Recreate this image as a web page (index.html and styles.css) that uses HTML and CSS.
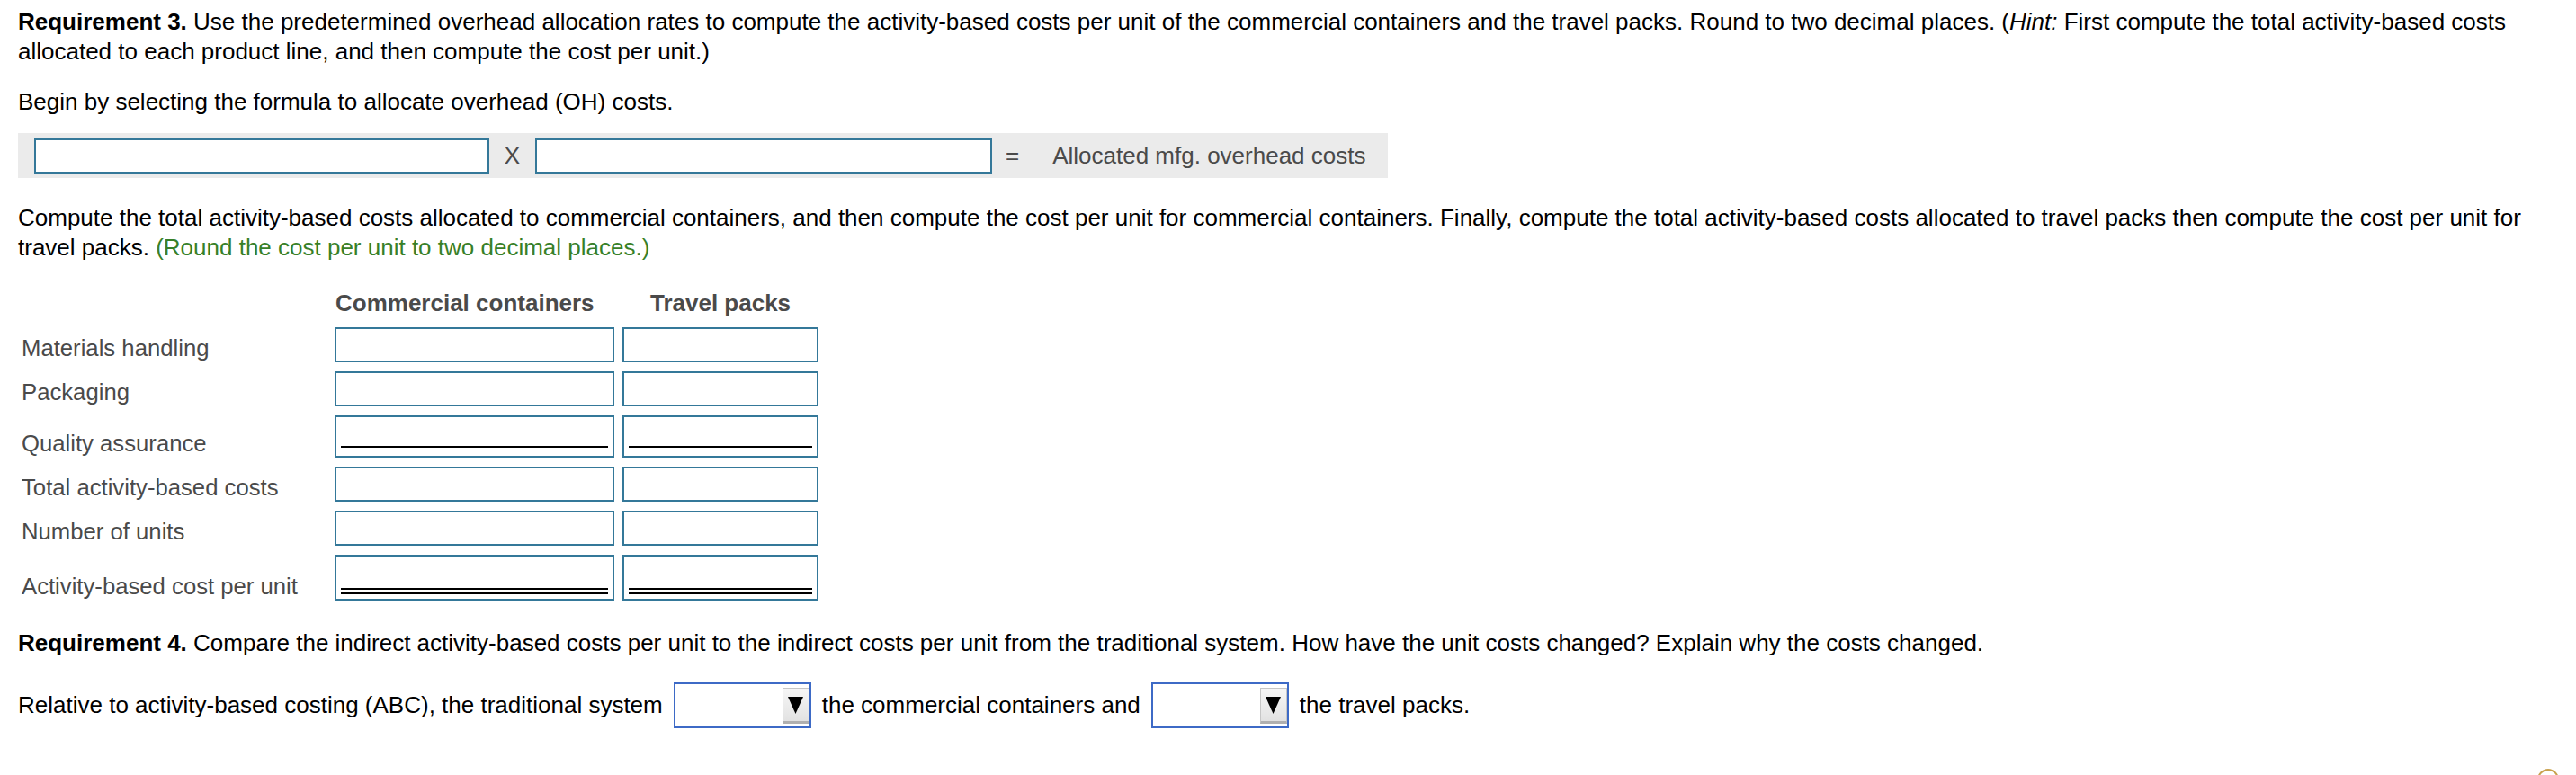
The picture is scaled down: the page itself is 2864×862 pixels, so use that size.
FILE: index.html
```html
<!DOCTYPE html>
<html lang="en">
<head>
<meta charset="utf-8">
<title>Requirement 3 and 4</title>
<link rel="stylesheet" href="styles.css">
</head>
<body>
<div class="page">
  <p class="para first"><b>Requirement 3.</b> Use the predetermined overhead allocation rates to compute the activity-based costs per unit of the commercial containers and the travel packs. Round to two decimal places. (<i>Hint:</i> First compute the total activity-based costs allocated to each product line, and then compute the cost per unit.)</p>

  <p class="para begin">Begin by selecting the formula to allocate overhead (OH) costs.</p>

  <div class="formula">
    <div class="box wide1"></div>
    <span class="op times">X</span>
    <div class="box wide2"></div>
    <span class="op equals">=</span>
    <span class="result">Allocated mfg. overhead costs</span>
  </div>

  <p class="para compute">Compute the total activity-based costs allocated to commercial containers, and then compute the cost per unit for commercial containers. Finally, compute the total activity-based costs allocated to travel packs then compute the cost per unit for travel packs. <span class="green">(Round the cost per unit to two decimal places.)</span></p>

  <div class="grid">
    <div class="hd-blank"></div>
    <div class="hd hd-left">Commercial containers</div>
    <div class="hd hd-center">Travel packs</div>

    <div class="label">Materials handling</div>
    <div class="box cell"></div>
    <div class="box cell"></div>

    <div class="label">Packaging</div>
    <div class="box cell"></div>
    <div class="box cell"></div>

    <div class="label">Quality assurance</div>
    <div class="box cell single"><div class="uline"></div></div>
    <div class="box cell single"><div class="uline"></div></div>

    <div class="label">Total activity-based costs</div>
    <div class="box cell"></div>
    <div class="box cell"></div>

    <div class="label">Number of units</div>
    <div class="box cell"></div>
    <div class="box cell"></div>

    <div class="label">Activity-based cost per unit</div>
    <div class="box cell double"><div class="dline"></div></div>
    <div class="box cell double"><div class="dline"></div></div>
  </div>

  <p class="para req4"><b>Requirement 4.</b> Compare the indirect activity-based costs per unit to the indirect costs per unit from the traditional system. How have the unit costs changed? Explain why the costs changed.</p>

  <div class="sentence">
    <span>Relative to activity-based costing (ABC), the traditional system</span>
    <div class="select">
      <div class="arrow-btn">
        <svg width="17" height="19" viewBox="0 0 17 19"><polygon points="0,0 17,0 8.5,19" fill="#000"/></svg>
      </div>
    </div>
    <span>the commercial containers and</span>
    <div class="select">
      <div class="arrow-btn">
        <svg width="17" height="19" viewBox="0 0 17 19"><polygon points="0,0 17,0 8.5,19" fill="#000"/></svg>
      </div>
    </div>
    <span>the travel packs.</span>
  </div>
</div>
<div class="help-ring"></div>
</body>
</html>
```

FILE: styles.css
```css
html, body {
  margin: 0;
  padding: 0;
  background: #ffffff;
  overflow: hidden;
}

body {
  font-family: "Liberation Sans", Arial, Helvetica, sans-serif;
  font-size: 26px;
  line-height: 33px;
  color: #000000;
  height: 862px;
  position: relative;
}

.page {
  padding: 0 24px 0 20px;
  width: 2820px;
}

.para {
  margin: 0;
}

.first {
  padding-top: 8px;
}

.begin {
  margin-top: 23px;
}

.green {
  color: #378028;
}

/* formula bar */
.formula {
  display: flex;
  width: fit-content;
  align-items: center;
  height: 50px;
  margin-top: 18px;
  padding: 0 25px 0 18px;
  background: #ebebeb;
  color: #4a4a4a;
}

.box {
  box-sizing: border-box;
  border: 2px solid #347899;
  background: #ffffff;
}

.wide1 {
  width: 506px;
  height: 39px;
}

.wide2 {
  width: 508px;
  height: 39px;
}

.op {
  display: inline-block;
  text-align: center;
}

.times {
  width: 51px;
}

.equals {
  margin-left: 15px;
}

.result {
  margin-left: 37px;
}

.compute {
  margin-top: 28px;
}

/* allocation grid */
.grid {
  display: grid;
  grid-template-columns: 343px 311px 218px;
  grid-template-rows: 33px 39px 39px 47px 39px 39px 51px;
  column-gap: 9px;
  row-gap: 10px;
  margin-top: 29px;
  color: #4a4a4a;
}

.hd {
  font-weight: bold;
  white-space: nowrap;
}

.hd-left {
  text-align: left;
  padding-left: 1px;
}

.hd-center {
  text-align: center;
}

.label {
  align-self: end;
  margin-bottom: -1px;
  padding-left: 4px;
  white-space: nowrap;
  font-size: 25.7px;
}

.cell {
  display: flex;
  flex-direction: column;
  justify-content: flex-end;
}

.single {
  padding: 0 5px 9px 5px;
}

.uline {
  border-bottom: 2px solid #000000;
}

.double {
  padding: 0 5px 5px 5px;
}

.dline {
  height: 3px;
  border-top: 2px solid #000000;
  border-bottom: 2px solid #000000;
}

.req4 {
  margin-top: 31px;
}

/* dropdown sentence */
.sentence {
  display: flex;
  align-items: center;
  gap: 12px;
  margin-top: 27px;
  white-space: nowrap;
}

.select {
  box-sizing: border-box;
  width: 153px;
  height: 51px;
  border: 2px solid #3d6ac6;
  background: #ffffff;
  display: flex;
  justify-content: flex-end;
  align-items: flex-start;
  padding-top: 4px;
}

.arrow-btn {
  box-sizing: border-box;
  width: 30px;
  height: 40px;
  background: linear-gradient(#f6f6f6, #e2e2e2);
  border: 1px solid #c6c6c6;
  border-bottom: 3px solid #b0b0b0;
  display: flex;
  align-items: center;
  justify-content: center;
}

.arrow-btn svg {
  display: block;
}

/* partially visible help button in corner */
.help-ring {
  position: absolute;
  left: 2821px;
  top: 855px;
  width: 24px;
  height: 24px;
  box-sizing: border-box;
  border: 2px solid #c9a24e;
  border-radius: 50%;
}
```
